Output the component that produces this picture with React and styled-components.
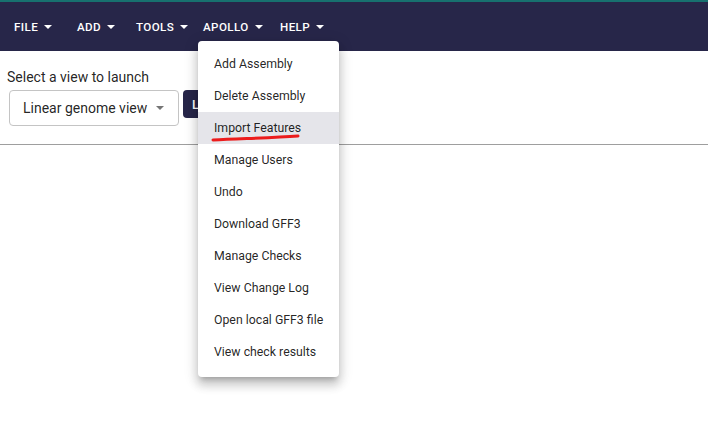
import React from 'react'
import styled, { createGlobalStyle } from 'styled-components'

const GlobalStyle = createGlobalStyle`
  body {
    margin: 0;
    background: #fff;
    font-family: Roboto, "Liberation Sans", sans-serif;
  }
`

const Page = styled.div`
  position: relative;
  width: 708px;
  height: 433px;
  overflow: hidden;
  background: #fff;
`

const AppBar = styled.header`
  height: 49px;
  background: #272649;
  border-top: 2px solid #17716f;
  display: flex;
  align-items: center;
  padding-left: 14px;
`

const MenuButton = styled.div`
  display: flex;
  align-items: center;
  width: ${p => p.w}px;
  color: #fff;
  font-size: 11.6px;
  font-weight: 500;
  letter-spacing: 0.4px;
  padding-top: 1px;
`

const Caret = styled.span`
  display: inline-block;
  width: 0;
  height: 0;
  margin-left: 6px;
  border-left: 4px solid transparent;
  border-right: 4px solid transparent;
  border-top: 4px solid ${p => p.color || '#fff'};
`

const Content = styled.section`
  padding: 18px 0 0 7px;
  border-bottom: 1px solid #9e9e9e;
  height: 94px;
  box-sizing: border-box;
`

const Label = styled.div`
  font-size: 14px;
  color: rgba(0, 0, 0, 0.87);
  line-height: 16px;
`

const Row = styled.div`
  display: flex;
  gap: 4px;
  margin-top: 5px;
  margin-left: 2px;
`

const Select = styled.div`
  width: 170px;
  height: 36px;
  box-sizing: border-box;
  border: 1px solid #c4c4c4;
  border-radius: 4px;
  display: flex;
  align-items: center;
  justify-content: space-between;
  padding: 0 14px 0 13px;
  font-size: 14px;
  white-space: nowrap;
  color: rgba(0, 0, 0, 0.87);
`

const LaunchButton = styled.button`
  height: 28px;
  padding: 0 9px;
  border: none;
  border-radius: 4px;
  background: #272649;
  color: #fff;
  font-family: inherit;
  font-size: 13px;
  font-weight: 500;
  letter-spacing: 0.4px;
`

const Menu = styled.ul`
  position: absolute;
  left: 198px;
  top: 41px;
  width: 141px;
  margin: 0;
  padding: 7px 0 9px;
  list-style: none;
  background: #fff;
  border-radius: 4px;
  box-shadow: 0 5px 5px -3px rgba(0,0,0,0.2), 0 8px 10px 1px rgba(0,0,0,0.14), 0 3px 14px 2px rgba(0,0,0,0.12);
`

const MenuItem = styled.li`
  position: relative;
  height: 32px;
  display: flex;
  align-items: center;
  padding-left: 16px;
  font-size: 12.3px;
  color: rgba(0, 0, 0, 0.87);
  background: ${p => (p.active ? '#e5e5ea' : 'transparent')};
`

const Scribble = styled.svg`
  position: absolute;
  left: 14px;
  top: 23px;
  overflow: visible;
`

const menuItems = [
  'Add Assembly',
  'Delete Assembly',
  'Import Features',
  'Manage Users',
  'Undo',
  'Download GFF3',
  'Manage Checks',
  'View Change Log',
  'Open local GFF3 file',
  'View check results',
]

const topMenus = [
  { label: 'FILE', w: 63 },
  { label: 'ADD', w: 59 },
  { label: 'TOOLS', w: 67 },
  { label: 'APOLLO', w: 77 },
  { label: 'HELP', w: 60 },
]

function App() {
  return (
    <Page>
      <GlobalStyle />
      <AppBar>
        {topMenus.map(m => (
          <MenuButton key={m.label} w={m.w}>
            {m.label}
            <Caret />
          </MenuButton>
        ))}
      </AppBar>
      <Content>
        <Label>Select a view to launch</Label>
        <Row>
          <Select>
            Linear genome view
            <Caret color="#757575" />
          </Select>
          <LaunchButton>LAUNCH</LaunchButton>
        </Row>
      </Content>
      <Menu>
        {menuItems.map(item => (
          <MenuItem key={item} active={item === 'Import Features'}>
            {item}
            {item === 'Import Features' && (
              <Scribble width="90" height="8">
                <path d="M1 5 C 30 3.5, 60 3, 86 1" stroke="#ec1c1c" strokeWidth="3" fill="none" strokeLinecap="round" />
              </Scribble>
            )}
          </MenuItem>
        ))}
      </Menu>
    </Page>
  )
}

export default App
